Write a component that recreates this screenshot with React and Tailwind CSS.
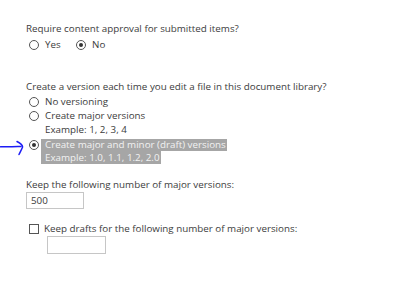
function Radio({ checked }) {
  return (
    <span className="flex h-[10px] w-[10px] shrink-0 items-center justify-center rounded-full border border-[#555] bg-white">
      {checked && <span className="h-[4px] w-[4px] rounded-full bg-[#333]" />}
    </span>
  );
}

export default function App() {
  return (
    <div className="relative h-[287px] w-[399px] overflow-hidden bg-white pl-[26px] pt-[22px] font-['Open_Sans',sans-serif] text-[9.8px] text-[#3c3c3c] whitespace-nowrap">
      <div className="h-[13px] leading-[13px]">Require content approval for submitted items?</div>
      <div className="mt-[3px] flex h-[14px] items-center pl-[3px] leading-[14px]">
        <div className="flex w-[47px] items-center gap-[6px]">
          <Radio />
          <span>Yes</span>
        </div>
        <div className="flex items-center gap-[6px]">
          <Radio checked />
          <span>No</span>
        </div>
      </div>

      <div className="mt-[28px] h-[13px] leading-[13px]">
        Create a version each time you edit a file in this document library?
      </div>
      <div className="mt-[2px] flex flex-col pl-[3px]">
        <div className="flex h-[14px] items-center gap-[6px] leading-[14px]">
          <Radio />
          <span>No versioning</span>
        </div>
        <div className="flex h-[14px] items-center gap-[6px] leading-[14px]">
          <Radio />
          <span>Create major versions</span>
        </div>
        <div className="flex h-[14px] items-center pl-[16px] leading-[14px]">Example: 1, 2, 3, 4</div>
        <div className="mt-[2px] flex h-[12px] items-center leading-[12px]">
          <Radio checked />
          <span className="ml-[2px] bg-[#a6a6a6] pl-[4px] pr-[1px] text-[#f2f2f2]">
            Create major and minor (draft) versions
          </span>
        </div>
        <div className="flex h-[13px] items-center pl-[12px] leading-[13px]">
          <span className="bg-[#a6a6a6] pl-[4px] pr-[1px] text-[#f2f2f2]">Example: 1.0, 1.1, 1.2, 2.0</span>
        </div>
      </div>

      <div className="mt-[14px] h-[13px] leading-[13px]">Keep the following number of major versions:</div>
      <div className="mt-[1px] flex h-[17px] w-[58px] items-center border border-[#c6c6c6] bg-white pl-[4px] leading-[15px]">
        500
      </div>

      <div className="mt-[13px] flex h-[14px] items-center gap-[5px] pl-[3px] leading-[14px]">
        <span className="h-[10px] w-[10px] shrink-0 border border-[#555] bg-white" />
        <span>Keep drafts for the following number of major versions:</span>
      </div>
      <div className="ml-[21px] h-[18px] w-[59px] border border-[#c6c6c6] bg-white" />

      <svg
        className="absolute left-0 top-[139px]"
        width="26"
        height="18"
        viewBox="0 0 26 18"
        fill="none"
        stroke="#1c1cf5"
        strokeWidth="1.5"
        strokeLinecap="round"
        strokeLinejoin="round"
      >
        <path d="M0.5 7.8 C6 7.8 13 7.6 21 7.4" />
        <path d="M17 2.5 C20 4 22.5 6 22.6 8 C21.6 10.5 20.2 12.8 19 15.5" />
      </svg>
    </div>
  );
}
